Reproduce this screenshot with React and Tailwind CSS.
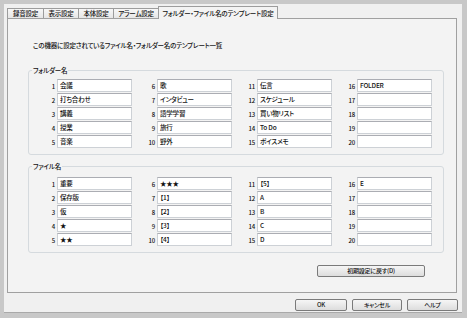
import React from 'react';

const tabs = [
    { label: '録音設定', w: 'w-[37px]' },
    { label: '表示設定', w: 'w-[36px]' },
    { label: '本体設定', w: 'w-[36px]' },
    { label: 'アラーム設定', w: 'w-[46px]' },
];

const folderNames = [
    '会議', '打ち合わせ', '講義', '授業', '音楽',
    '歌', 'インタビュー', '語学学習', '旅行', '野外',
    '伝言', 'スケジュール', '買い物リスト', 'To Do', 'ボイスメモ',
    'FOLDER', '', '', '', '',
];

const fileNames = [
    '重要', '保存版', '仮', '★', '★★',
    '★★★', '【1】', '【2】', '【3】', '【4】',
    '【5】', 'A', 'B', 'C', 'D',
    'E', '', '', '', '',
];

const NameGrid = ({ names }) => (
    <div className="grid grid-flow-col grid-rows-5 grid-cols-[repeat(4,100px)] gap-y-px">
        {names.map((name, i) => (
            <div key={i} className="flex items-center h-[13px]">
                <span className="w-[14px] pr-[2px] text-right leading-[13px] text-[6px] pt-px">{i + 1}</span>
                <div className="w-[75px] h-[13px] bg-white border border-[#cdd1d6] border-t-[#abadb3] pl-[2px] leading-[11px] whitespace-nowrap overflow-hidden">
                    {name}
                </div>
            </div>
        ))}
    </div>
);

const GroupBox = ({ title, names, className, top }) => (
    <fieldset className={`ml-[20px] w-[414px] border border-[#d5dade] rounded-[3px] ${className}`}>
        <legend className="ml-[3px] px-[1px] leading-[8px]">{title}</legend>
        <div className={`pl-[14px] pb-[6px] ${top}`}>
            <NameGrid names={names} />
        </div>
    </fieldset>
);

const Button = ({ children, className }) => (
    <button
        type="button"
        className={`h-[12px] border border-[#7a7a7a] rounded-[2px] bg-gradient-to-b from-[#f6f6f6] to-[#dddddd] flex items-center justify-center leading-[10px] text-[6px] text-[#111] ${className}`}
    >
        {children}
    </button>
);

export default function App() {
    return (
        <div className="w-[467px] h-[318px] bg-[#c8c8c8] pt-[4px] pl-[4px] pr-[5px] pb-[5px] flex font-['Noto_Sans_CJK_JP',sans-serif] [font-feature-settings:'palt'] text-[6.5px] font-medium tracking-[-0.2px] text-[#111]">
            <div className="flex-1 flex flex-col bg-[#f0f0f0] border-b border-[#a9a9a9] pl-[3px] pt-[2px]">
                {/* tab strip */}
                <div className="flex items-end h-[12px]">
                    {tabs.map((t, i) => (
                        <div
                            key={t.label}
                            className={`${t.w} h-[10px] ${i > 0 ? '-ml-px' : ''} border border-b-0 border-[#9c9c9c] bg-gradient-to-b from-[#f7f7f7] to-[#e6e6e6] flex items-center justify-center leading-[9px] whitespace-nowrap`}
                        >
                            {t.label}
                        </div>
                    ))}
                    <div className="w-[120px] h-[13px] -ml-px -mb-px relative z-10 border border-b-0 border-[#9c9c9c] bg-[#f3f3f3] flex items-center justify-center leading-[10px] whitespace-nowrap">
                        フォルダー・ファイル名のテンプレート設定
                    </div>
                </div>

                {/* panel */}
                <div className="w-[450px] h-[275px] border border-[#a0a0a0] bg-[#f3f3f3] flex flex-col">
                    <p className="mt-[21px] pl-[25px] leading-[10px]">
                        この機器に設定されているファイル名・フォルダー名のテンプレート一覧
                    </p>

                    <GroupBox title="フォルダー名" names={folderNames} className="mt-[16px]" top="pt-[5px]" />
                    <GroupBox title="ファイル名" names={fileNames} className="mt-[7px]" top="pt-[7px]" />

                    <div className="flex justify-end mt-[12px] pr-[31px]">
                        <Button className="w-[108px]">初期設定に戻す(D)</Button>
                    </div>
                </div>

                {/* dialog buttons */}
                <div className="flex justify-end gap-[5px] mt-[6px] pr-[4px]">
                    <Button className="w-[52px]">OK</Button>
                    <Button className="w-[50px]">キャンセル</Button>
                    <Button className="w-[51px]">ヘルプ</Button>
                </div>
            </div>
        </div>
    );
}
